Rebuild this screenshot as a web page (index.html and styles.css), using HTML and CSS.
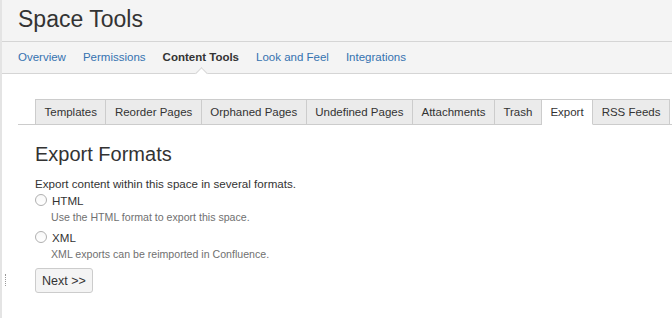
FILE: index.html
```html
<!DOCTYPE html>
<html lang="en">
<head>
  <meta charset="UTF-8">
  <title>Space Tools</title>
  <link rel="stylesheet" href="styles.css">
</head>
<body>

  <div class="page">
    <div class="resize-handle"></div>

    <div class="page-header">
      <h1 class="page-title">Space Tools</h1>
    </div>

    <div class="navbar">
      <a href="#" class="nav-link">Overview</a>
      <a href="#" class="nav-link">Permissions</a>
      <a href="#" class="nav-link active">Content Tools</a>
      <a href="#" class="nav-link">Look and Feel</a>
      <a href="#" class="nav-link">Integrations</a>
    </div>

    <div class="content">
      <div class="tabbar">
        <div class="tab">Templates</div>
        <div class="tab">Reorder Pages</div>
        <div class="tab">Orphaned Pages</div>
        <div class="tab">Undefined Pages</div>
        <div class="tab">Attachments</div>
        <div class="tab">Trash</div>
        <div class="tab active">Export</div>
        <div class="tab">RSS Feeds</div>
      </div>

      <div class="tab-body">
        <h2 class="section-title">Export Formats</h2>
        <p class="intro">Export content within this space in several formats.</p>

        <label class="option">
          <span class="radio"></span>
          <span class="option-label">HTML</span>
        </label>
        <div class="option-desc">Use the HTML format to export this space.</div>

        <label class="option">
          <span class="radio"></span>
          <span class="option-label">XML</span>
        </label>
        <div class="option-desc">XML exports can be reimported in Confluence.</div>

        <button class="btn">Next &gt;&gt;</button>
      </div>
    </div>
  </div>

</body>
</html>
```

FILE: styles.css
```css
body {
  margin: 0;
  font-family: "Liberation Sans", Arial, sans-serif;
  background-color: #ffffff;
  color: #333333;
}
.page {
  position: relative;
  min-height: 318px;
  border-left: 2px solid #e4e4e4;
}
.resize-handle {
  position: absolute;
  left: 3px;
  top: 274px;
  width: 1px;
  height: 12px;
  border-left: 1px dotted #999;
}
.page-header {
  background-color: #f4f4f4;
  height: 41px;
  border-bottom: 1px solid #d5d5d5;
  padding-left: 16px;
}
.page-title {
  margin: 0;
  padding-top: 5px;
  font-size: 23px;
  font-weight: normal;
  line-height: 28px;
  color: #333;
}
.navbar {
  display: flex;
  gap: 17px;
  background-color: #f4f4f4;
  height: 31px;
  border-bottom: 1px solid #d5d5d5;
  padding-left: 16px;
  align-items: center;
}
.nav-link {
  position: relative;
  font-size: 11.5px;
  color: #3572b0;
  text-decoration: none;
  line-height: 31px;
  white-space: nowrap;
}
.nav-link.active {
  color: #333;
  font-weight: bold;
}
.nav-link.active::after {
  content: "";
  position: absolute;
  left: 50%;
  bottom: -5px;
  width: 8px;
  height: 8px;
  margin-left: -4px;
  background: #fff;
  border-left: 1px solid #d5d5d5;
  border-top: 1px solid #d5d5d5;
  transform: rotate(45deg);
}
.content {
  padding: 25px 0 0 16px;
}
.tabbar {
  display: flex;
  padding-left: 17px;
  border-bottom: 1px solid #cccccc;
}
.tab {
  flex-shrink: 0;
  white-space: nowrap;
  font-size: 11.5px;
  padding: 0 8.5px;
  height: 24px;
  line-height: 25px;
  background-color: #ebebeb;
  border: 1px solid #cccccc;
  border-left: none;
  color: #333;
  margin-bottom: -1px;
}
.tab:first-child {
  border-left: 1px solid #cccccc;
}
.tab.active {
  background-color: #ffffff;
  border-bottom-color: #ffffff;
}
.tab-body {
  padding-left: 17px;
}
.section-title {
  margin: 17px 0 0;
  font-size: 20px;
  font-weight: normal;
  line-height: 24px;
  color: #333;
}
.intro {
  margin: 10px 0 0;
  font-size: 11.6px;
  line-height: 16px;
}
.option {
  display: flex;
  align-items: center;
  gap: 5px;
  height: 16px;
}
.radio {
  width: 10px;
  height: 10px;
  border: 1px solid #b0b0b0;
  border-radius: 50%;
  background: linear-gradient(#f8f8f8, #ffffff);
}
.option-label {
  font-size: 11.6px;
  color: #333;
}
.option-desc {
  font-size: 10.6px;
  color: #707070;
  padding-left: 16px;
  line-height: 14px;
  margin-top: 2px;
  margin-bottom: 5px;
}
.btn {
  margin-top: 2px;
  font-family: "Liberation Sans", Arial, sans-serif;
  font-size: 12.5px;
  color: #333;
  background: #f4f4f4;
  border: 1px solid #cccccc;
  border-radius: 3px;
  height: 25px;
  padding: 0 6px;
}
```
